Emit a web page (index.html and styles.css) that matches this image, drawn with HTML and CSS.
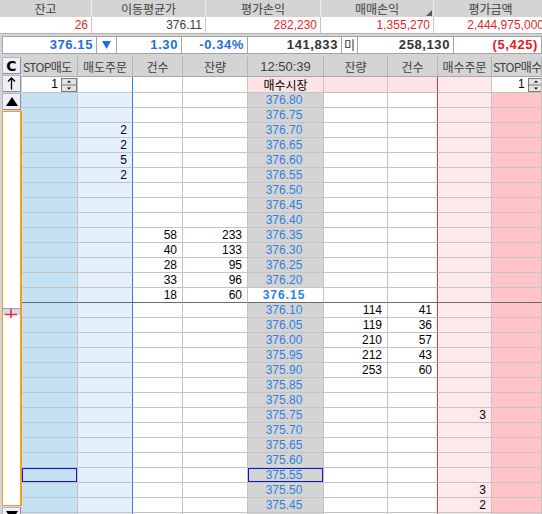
FILE: index.html
```html
<!DOCTYPE html>
<html lang="ko">
<head>
<meta charset="utf-8">
<title>호가창</title>
<link rel="stylesheet" href="styles.css">
</head>
<body>
<div class="info">
  <div class="info-head">
    <div>잔고</div><div>이동평균가</div><div>평가손익</div><div class="tri">매매손익</div><div>평가금액</div>
  </div>
  <div class="info-vals">
    <div>26</div><div class="dark">376.11</div><div>282,230</div><div>1,355,270</div><div>2,444,975,000</div>
  </div>
</div>
<div class="pbar">
  <div class="blue">376.15</div>
  <div class="arrow"><svg width="9" height="8" viewBox="0 0 9 8"><polygon points="0,0 9,0 4.5,8" fill="#1e6fe0"/></svg></div>
  <div class="blue">1.30</div>
  <div class="blue">-0.34%</div>
  <div class="dark">141,833</div>
  <div class="mi">미</div>
  <div class="dark">258,130</div>
  <div class="red">(5,425)</div>
</div>
<div class="book">
  <div class="side">
    <div class="btn c">C</div>
    <div class="btn"><svg width="9" height="13" viewBox="0 0 9 13"><path d="M4.5 1 V12.5 M1 4.5 L4.5 1 L8 4.5" stroke="#000" stroke-width="1.3" fill="none"/></svg></div>
    <div class="btn"><svg width="12" height="9" viewBox="0 0 12 9"><polygon points="6,0 12,9 0,9" fill="#000"/></svg></div>
    <div class="frame">
      <svg class="marker" width="17" height="10" viewBox="0 0 17 10"><rect x="0" y="0" width="17" height="7" fill="#dcd6f4"/><rect x="0" y="0" width="17" height="1" fill="#a0a0a0"/><path d="M2 6.5 H14 M8 1 V10" stroke="#e0303a" stroke-width="1.6"/></svg>
    </div>
    <div class="btn"><svg width="12" height="9" viewBox="0 0 12 9"><polygon points="0,0 12,0 6,9" fill="#000"/></svg></div>
  </div>
  <div class="grid">
    <div class="hrow"><span class="stop">STOP매도</span><span>매도주문</span><span>건수</span><span>잔량</span><span class="time">12:50:39</span><span>잔량</span><span>건수</span><span>매수주문</span><span class="stop">STOP매수</span></div>
    <div class="srow">
      <span class="spin-l">1<svg class="spin" width="16" height="14" viewBox="0 0 16 14"><rect x="0.5" y="0.5" width="15" height="13" fill="#e4e4e4" stroke="#7a7a7a"/><path d="M1 7 H15" stroke="#7a7a7a"/><polygon points="8,2.5 10,4.5 6,4.5" fill="#000"/><polygon points="6,9.5 10,9.5 8,11.5" fill="#000"/></svg></span>
      <span></span><span></span><span></span><span class="mkt">매수시장</span><span></span><span></span><span></span>
      <span class="spin-r">1<svg class="spin" width="16" height="14" viewBox="0 0 16 14"><rect x="0.5" y="0.5" width="15" height="13" fill="#e4e4e4" stroke="#7a7a7a"/><path d="M1 7 H15" stroke="#7a7a7a"/><polygon points="8,2.5 10,4.5 6,4.5" fill="#000"/><polygon points="6,9.5 10,9.5 8,11.5" fill="#000"/></svg></span>
    </div>
    <div class="row"><span></span><span></span><span></span><span></span><span>376.80</span><span></span><span></span><span></span><span></span></div>
    <div class="row"><span></span><span></span><span></span><span></span><span>376.75</span><span></span><span></span><span></span><span></span></div>
    <div class="row"><span></span><span>2</span><span></span><span></span><span>376.70</span><span></span><span></span><span></span><span></span></div>
    <div class="row"><span></span><span>2</span><span></span><span></span><span>376.65</span><span></span><span></span><span></span><span></span></div>
    <div class="row"><span></span><span>5</span><span></span><span></span><span>376.60</span><span></span><span></span><span></span><span></span></div>
    <div class="row"><span></span><span>2</span><span></span><span></span><span>376.55</span><span></span><span></span><span></span><span></span></div>
    <div class="row"><span></span><span></span><span></span><span></span><span>376.50</span><span></span><span></span><span></span><span></span></div>
    <div class="row"><span></span><span></span><span></span><span></span><span>376.45</span><span></span><span></span><span></span><span></span></div>
    <div class="row"><span></span><span></span><span></span><span></span><span>376.40</span><span></span><span></span><span></span><span></span></div>
    <div class="row"><span></span><span></span><span>58</span><span>233</span><span>376.35</span><span></span><span></span><span></span><span></span></div>
    <div class="row"><span></span><span></span><span>40</span><span>133</span><span>376.30</span><span></span><span></span><span></span><span></span></div>
    <div class="row"><span></span><span></span><span>28</span><span>95</span><span>376.25</span><span></span><span></span><span></span><span></span></div>
    <div class="row"><span></span><span></span><span>33</span><span>96</span><span>376.20</span><span></span><span></span><span></span><span></span></div>
    <div class="row cur"><span></span><span></span><span>18</span><span>60</span><span>376.15</span><span></span><span></span><span></span><span></span></div>
    <div class="row"><span></span><span></span><span></span><span></span><span>376.10</span><span>114</span><span>41</span><span></span><span></span></div>
    <div class="row"><span></span><span></span><span></span><span></span><span>376.05</span><span>119</span><span>36</span><span></span><span></span></div>
    <div class="row"><span></span><span></span><span></span><span></span><span>376.00</span><span>210</span><span>57</span><span></span><span></span></div>
    <div class="row"><span></span><span></span><span></span><span></span><span>375.95</span><span>212</span><span>43</span><span></span><span></span></div>
    <div class="row"><span></span><span></span><span></span><span></span><span>375.90</span><span>253</span><span>60</span><span></span><span></span></div>
    <div class="row"><span></span><span></span><span></span><span></span><span>375.85</span><span></span><span></span><span></span><span></span></div>
    <div class="row"><span></span><span></span><span></span><span></span><span>375.80</span><span></span><span></span><span></span><span></span></div>
    <div class="row"><span></span><span></span><span></span><span></span><span>375.75</span><span></span><span></span><span>3</span><span></span></div>
    <div class="row"><span></span><span></span><span></span><span></span><span>375.70</span><span></span><span></span><span></span><span></span></div>
    <div class="row"><span></span><span></span><span></span><span></span><span>375.65</span><span></span><span></span><span></span><span></span></div>
    <div class="row"><span></span><span></span><span></span><span></span><span>375.60</span><span></span><span></span><span></span><span></span></div>
    <div class="row"><span class="sel"></span><span></span><span></span><span></span><span class="sel">375.55</span><span></span><span></span><span></span><span></span></div>
    <div class="row"><span></span><span></span><span></span><span></span><span>375.50</span><span></span><span></span><span>3</span><span></span></div>
    <div class="row"><span></span><span></span><span></span><span></span><span>375.45</span><span></span><span></span><span>2</span><span></span></div>
    <div class="row"><span></span><span></span><span></span><span></span><span>375.40</span><span></span><span></span><span></span><span></span></div>
  </div>
</div>
</body>
</html>
```

FILE: styles.css
```css
* { box-sizing: border-box; }
html, body { margin: 0; padding: 0; }
body {
  width: 542px;
  height: 514px;
  overflow: hidden;
  background: #d4d4d4;
  font-family: "Liberation Sans", "Noto Sans CJK KR", sans-serif;
  font-size: 12px;
  color: #000;
}

/* top info table */
.info { width: 548px; }
.info-head, .info-vals { display: flex; }
.info-head div, .info-vals div { flex: none; }
.info-head div:nth-child(1), .info-vals div:nth-child(1) { width: 92px; }
.info-head div:nth-child(2), .info-vals div:nth-child(2) { width: 114px; }
.info-head div:nth-child(3), .info-vals div:nth-child(3) { width: 115px; }
.info-head div:nth-child(4), .info-vals div:nth-child(4) { width: 113px; }
.info-head div:nth-child(5), .info-vals div:nth-child(5) { width: 114px; }
.info-head div {
  height: 17px;
  line-height: 17px;
  text-align: center;
  color: #404040;
  font-family: "Noto Sans CJK KR", sans-serif;
  border-right: 1px solid #ececec;
  position: relative;
}
.info-head .tri::after {
  content: "";
  position: absolute;
  right: 1px;
  bottom: 1px;
  width: 0;
  height: 0;
  border-left: 6px solid transparent;
  border-bottom: 6px solid #5c5c5c;
}
.info-vals div {
  height: 17px;
  line-height: 16px;
  background: #fff;
  text-align: right;
  padding-right: 3px;
  color: #e02a2a;
  border-right: 1px solid #c8c8c8;
  border-bottom: 1px solid #b0b0b0;
  white-space: nowrap;
}
.info-vals .dark { color: #404040; }

/* price bar */
.pbar {
  display: flex;
  height: 18px;
  margin: 2px 0 3px 2px;
}
.pbar div {
  flex: none;
  height: 18px;
  background: #fff;
  border: 1px solid #a4a4a4;
  border-left: none;
  text-align: right;
  padding-right: 3px;
  line-height: 16px;
  font-weight: bold;
  font-size: 13px;
  letter-spacing: 0.6px;
}
.pbar div:nth-child(1) { width: 95px; border-left: 1px solid #a4a4a4; }
.pbar div:nth-child(2) { width: 20px; }
.pbar div:nth-child(3) { width: 65px; }
.pbar div:nth-child(4) { width: 66px; }
.pbar div:nth-child(5) { width: 94px; }
.pbar div:nth-child(6) { width: 16px; }
.pbar div:nth-child(7) { width: 96px; }
.pbar div:nth-child(8) { width: 88px; }
.pbar .blue { color: #1e6fe0; }
.pbar .dark { color: #333; }
.pbar .red { color: #e02020; }
.pbar .arrow {
  display: flex;
  align-items: center;
  justify-content: center;
  padding: 0;
}
.pbar .mi {
  text-align: center;
  padding: 0;
  font-weight: normal;
  color: #333;
  letter-spacing: 0;
  font-family: "Noto Sans CJK KR", sans-serif;
  font-size: 12px;
}

/* order book */
.book { display: flex; }
.side {
  flex: none;
  width: 22px;
  padding-left: 2px;
  display: flex;
  flex-direction: column;
}
.btn {
  flex: none;
  width: 19px;
  height: 17px;
  margin-bottom: 1px;
  border: 1px solid #8c8ca8;
  border-top-color: #b4b4c8;
  border-left-color: #b4b4c8;
  background: #efeff6;
  display: flex;
  align-items: center;
  justify-content: center;
}
.btn.c {
  font-weight: bold;
  font-size: 14px;
  font-family: "DejaVu Sans", sans-serif;
}
.frame {
  flex: none;
  width: 20px;
  height: 395px;
  margin-bottom: 1px;
  background: #fff;
  border: 1px solid #f59e20;
  border-right-width: 2px;
}
.marker {
  display: block;
  margin-top: 196px;
}

.grid { flex: none; width: 520px; }
.hrow, .srow, .row {
  display: grid;
  grid-template-columns: 56px 55px 50px 65px 76px 64px 50px 54px 50px;
}
.hrow { height: 20px; }
.hrow span {
  background: #d4d4d4;
  border-right: 1px solid #b4b4b4;
  border-bottom: 1px solid #a8a8a8;
  text-align: center;
  line-height: 19px;
  color: #404040;
  font-family: "Noto Sans CJK KR", sans-serif;
  white-space: nowrap;
  overflow: hidden;
}
.hrow .stop { letter-spacing: -0.6px; padding-left: 1px; text-align: left; }
.hrow .time {
  font-family: "Liberation Sans", sans-serif;
  font-size: 13px;
}

.srow { height: 16px; }
.srow span, .row span {
  border-right: 1px solid #c4c4c4;
  border-bottom: 1px solid #c4c4c4;
  white-space: nowrap;
  overflow: hidden;
}
.srow span { background: #fff; line-height: 15px; }
.srow span:nth-child(2) { border-right-color: #2d7de6; }
.srow span:nth-child(7) { border-right-color: #e23a3a; }
.srow span:nth-child(5),
.srow span:nth-child(6),
.srow span:nth-child(7) { background: #fde4e4; }
.srow span:nth-child(8) { background: #fde8ea; }
.srow .mkt {
  text-align: center;
  font-family: "Noto Sans CJK KR", sans-serif;
  color: #000;
}
.spin-l {
  display: flex;
  align-items: center;
  justify-content: flex-end;
}
.spin-l .spin { margin-left: 3px; }
.spin-r {
  display: flex;
  align-items: center;
  padding-left: 26px;
}
.spin-r .spin { margin-left: 3px; flex: none; }

.row { height: 15px; }
.row span {
  text-align: right;
  padding-right: 5px;
  line-height: 14px;
  background: #fff;
}
.row span:nth-child(1) { background: #c4e2f4; }
.row span:nth-child(2) { background: #e4f0fc; border-right-color: #2d7de6; }
.row span:nth-child(5) {
  background: #d4d4d4;
  color: #2f7fe0;
  text-align: center;
  padding-right: 3px;
}
.row span:nth-child(7) { border-right-color: #e23a3a; }
.row span:nth-child(8) { background: #fde8ea; }
.row span:nth-child(9) { background: #fec4c8; }
.row.cur span { border-bottom-color: #6a6a6a; }
.row.cur span:nth-child(5) {
  background: #fff;
  font-weight: bold;
  letter-spacing: 1px;
}
.row span.sel { box-shadow: inset 0 0 0 1px #0a14e0; }
```
